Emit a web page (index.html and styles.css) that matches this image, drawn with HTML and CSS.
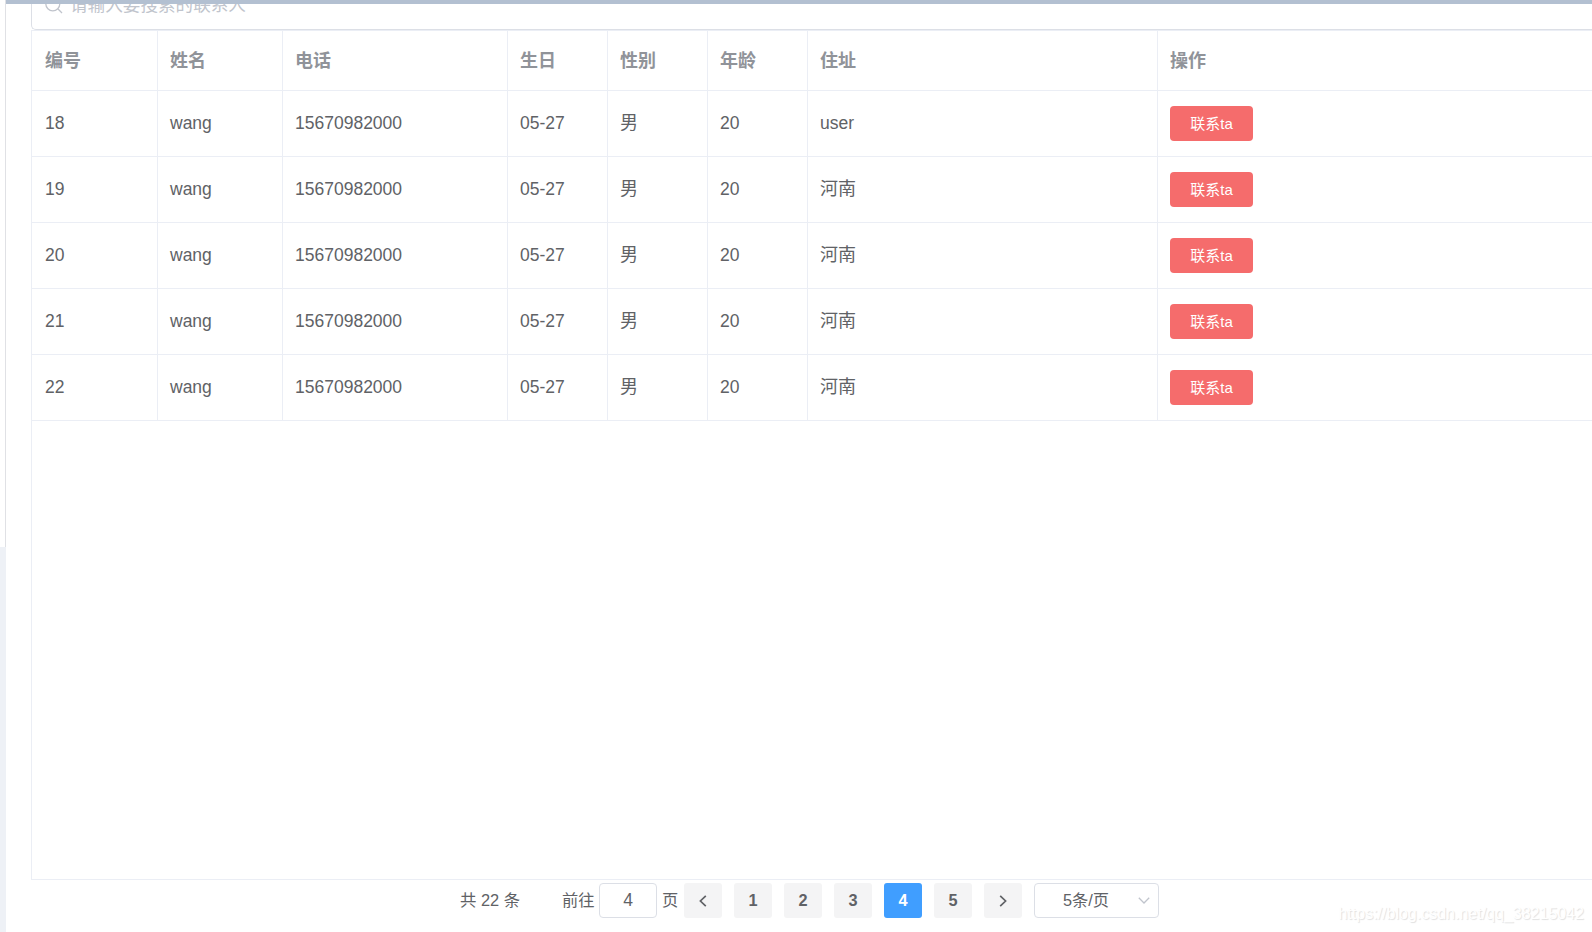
FILE: index.html
```html
<!DOCTYPE html>
<html lang="zh-CN">
<head>
<meta charset="utf-8">
<title>联系人</title>
<link rel="stylesheet" href="styles.css">
</head>
<body>
<div class="layout">
  <aside class="sidebar"><div class="menu"></div></aside>
  <div class="content">
    <header class="topbar"></header>
    <main class="main">
      <div class="search">
        <svg class="search-icon" viewBox="0 0 18 18"><circle cx="7.8" cy="7.8" r="7"/><path d="M12.8 12.8L17 17"/></svg>
        <span class="placeholder">请输入要搜索的联系人</span>
      </div>
      <div class="table-box">
        <table class="table">
          <colgroup><col class="w-id"><col class="w-name"><col class="w-phone"><col class="w-small"><col class="w-small"><col class="w-small"><col class="w-address"><col></colgroup>
          <thead><tr><th>编号</th><th>姓名</th><th>电话</th><th>生日</th><th>性别</th><th>年龄</th><th>住址</th><th>操作</th></tr></thead>
          <tbody>
            <tr><td>18</td><td>wang</td><td>15670982000</td><td>05-27</td><td class="han">男</td><td>20</td><td>user</td><td class="action"><button class="contact">联系ta</button></td></tr>
            <tr><td>19</td><td>wang</td><td>15670982000</td><td>05-27</td><td class="han">男</td><td>20</td><td class="han">河南</td><td class="action"><button class="contact">联系ta</button></td></tr>
            <tr><td>20</td><td>wang</td><td>15670982000</td><td>05-27</td><td class="han">男</td><td>20</td><td class="han">河南</td><td class="action"><button class="contact">联系ta</button></td></tr>
            <tr><td>21</td><td>wang</td><td>15670982000</td><td>05-27</td><td class="han">男</td><td>20</td><td class="han">河南</td><td class="action"><button class="contact">联系ta</button></td></tr>
            <tr><td>22</td><td>wang</td><td>15670982000</td><td>05-27</td><td class="han">男</td><td>20</td><td class="han">河南</td><td class="action"><button class="contact">联系ta</button></td></tr>
          </tbody>
        </table>
      </div>
      <nav class="pagination">
        <span class="total">共 22 条</span>
        <span class="jump">前往</span>
        <span class="jump-input">4</span>
        <span class="unit">页</span>
        <div class="pages">
          <button class="page"><svg class="arrow" viewBox="0 0 8 12"><path d="M6.8 0.8L1.4 6L6.8 11.2"/></svg></button>
          <button class="page">1</button>
          <button class="page">2</button>
          <button class="page">3</button>
          <button class="page active">4</button>
          <button class="page">5</button>
          <button class="page"><svg class="arrow" viewBox="0 0 8 12"><path d="M1.2 0.8L6.6 6L1.2 11.2"/></svg></button>
        </div>
        <div class="size"><span class="size-text">5条/页</span><svg class="caret" viewBox="0 0 12 7"><path d="M0.8 0.8L6 6L11.2 0.8"/></svg></div>
      </nav>
    </main>
  </div>
</div>
<div class="watermark">https://blog.csdn.net/qq_38215042</div>
</body>
</html>
```
FILE: styles.css
```css
* { box-sizing: border-box; }
body {
  margin: 0;
  background: #fff;
  color: #606266;
  font: 17.5px/24px "Liberation Sans", "Noto Sans CJK SC", sans-serif;
}
.layout { display: flex; height: 932px; overflow: hidden; }
.sidebar { width: 6px; flex: none; background: #eef1f6; }
.menu { height: 547px; background: #fff; border-right: 1px solid #e0e1e5; }
.content { flex: 1; min-width: 0; }
.topbar { height: 4px; background: #b3c0d1; position: relative; z-index: 1; }
.main { padding-left: 25px; }
.search {
  display: flex;
  align-items: center;
  height: 50px;
  margin-top: -24px;
  padding: 0 0 1px 13px;
  border: 1px solid #dcdfe6;
  border-right: 0;
  border-radius: 5px 0 0 5px;
  color: #c0c4cc;
}
.search-icon { width: 18px; height: 18px; margin: 1px 7px 0 0; fill: none; stroke: #c0c4cc; stroke-width: 1.3; }
.placeholder { font-size: 17.6px; line-height: 24px; }
.table-box { height: 850px; border: 1px solid #ebeef5; border-right: 0; }
.table { width: 100%; table-layout: fixed; border-collapse: separate; border-spacing: 0; }
.w-id { width: 126px; }
.w-name { width: 125px; }
.w-phone { width: 225px; }
.w-small { width: 100px; }
.w-address { width: 350px; }
th, td {
  padding: 0 0 0 12px;
  border-right: 1px solid #ebeef5;
  border-bottom: 1px solid #ebeef5;
  text-align: left;
  vertical-align: middle;
}
th:first-child, td:first-child { padding-left: 13px; }
th:last-child, td:last-child { border-right: 0; }
th { height: 60px; color: #909399; font-size: 18px; font-weight: 700; }
td { height: 66px; padding-bottom: 2px; }
.han { font-size: 18px; }
.action { padding-bottom: 0; }
.contact {
  display: block;
  width: 83px;
  height: 35px;
  padding: 0;
  border: 0;
  border-radius: 4px;
  background: #f56c6c;
  color: #fff;
  font: 15px/35px "Liberation Sans", "Noto Sans CJK SC", sans-serif;
}
.pagination { display: flex; align-items: center; height: 35px; margin-top: 3px; padding-left: 428px; font-size: 16.25px; white-space: nowrap; }
.total, .jump, .unit, .size-text { padding-bottom: 2px; }
.total { width: 103px; padding-left: 1px; font-size: 16.4px; }
.jump { width: 37px; }
.jump-input { width: 58px; height: 35px; border: 1px solid #dcdfe6; border-radius: 4px; font-size: 17.5px; line-height: 33px; text-align: center; }
.unit { width: 27px; padding-left: 5px; }
.pages { display: flex; gap: 12px; }
.page {
  display: flex;
  align-items: center;
  justify-content: center;
  width: 38px;
  height: 35px;
  padding: 0;
  border: 0;
  border-radius: 3px;
  background: #f4f4f5;
  color: #606266;
  font: 700 16.25px/35px "Liberation Sans", sans-serif;
}
.page.active { background: #409eff; color: #fff; }
.arrow { width: 8px; height: 12px; fill: none; stroke: #606266; stroke-width: 1.7; }
.size {
  display: flex;
  align-items: center;
  justify-content: space-between;
  width: 125px;
  height: 35px;
  margin-left: 12px;
  padding: 0 8px 0 28px;
  border: 1px solid #dcdfe6;
  border-radius: 4px;
}
.caret { width: 12px; height: 7px; margin-bottom: 1px; fill: none; stroke: #c0c4cc; stroke-width: 1.3; }
.watermark {
  position: absolute;
  right: 8px;
  bottom: 6px;
  color: #fff;
  font-size: 16px;
  text-shadow: 1px 1px 1px #e0e0e0;
}
```
